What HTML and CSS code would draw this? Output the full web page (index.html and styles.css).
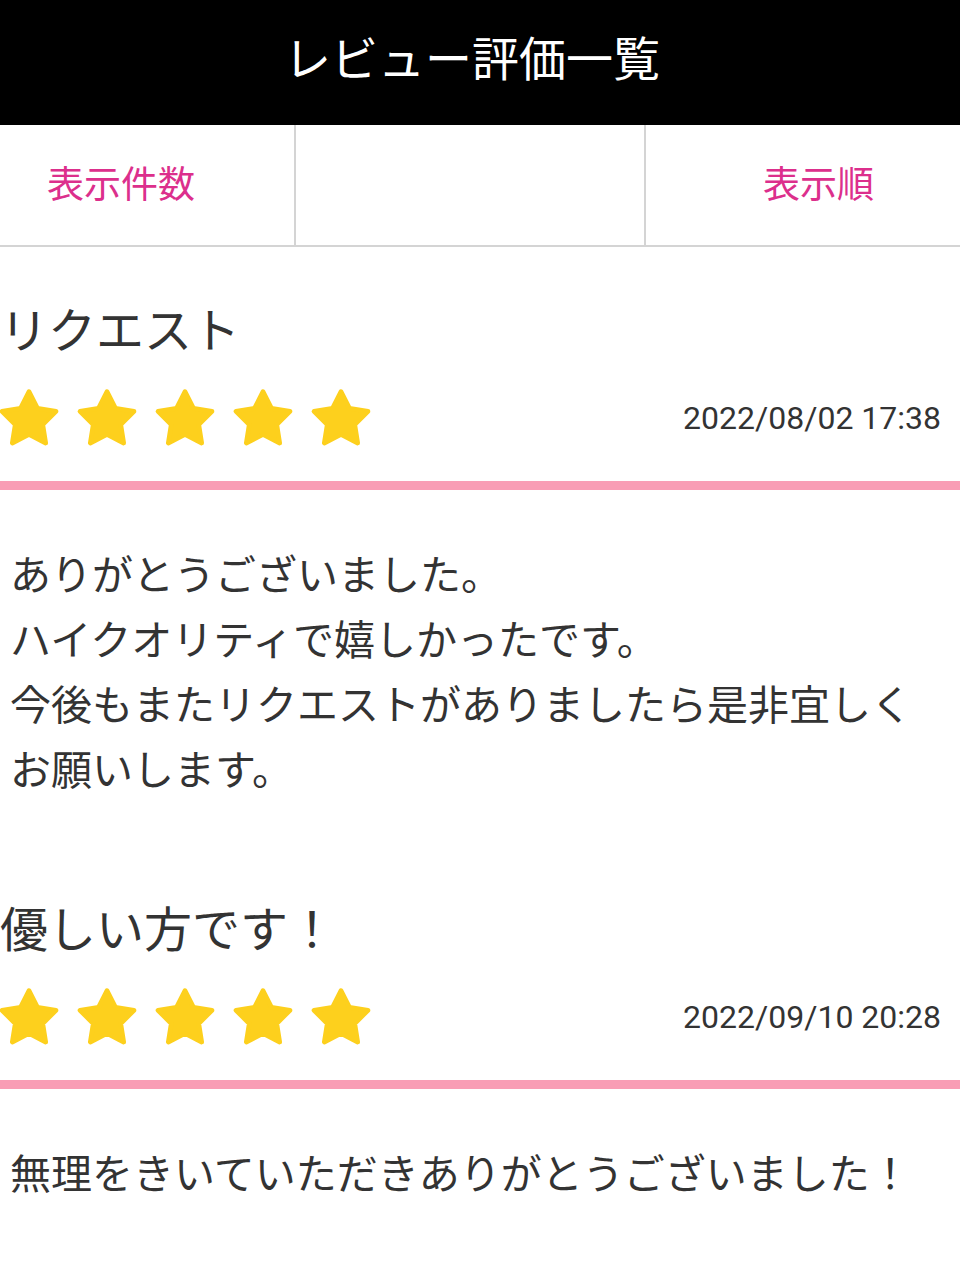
FILE: index.html
```html
<!DOCTYPE html>
<html lang="ja">
<head>
<meta charset="utf-8">
<title>レビュー評価一覧</title>
<link rel="stylesheet" href="styles.css">
</head>
<body>
<header class="page-header"><h1 class="page-title">レビュー評価一覧</h1></header>
<nav class="tabs">
  <div class="tab tab-count">表示件数</div>
  <div class="tab tab-empty"></div>
  <div class="tab tab-order">表示順</div>
</nav>
<main class="reviews">
  <article class="review">
    <h2 class="review-title">リクエスト</h2>
    <div class="review-meta">
      <div class="stars">
        <svg class="star" viewBox="0 0 24 24"><path d="M12 1.8L15.29 8.27L22.46 9.4L17.33 14.53L18.47 21.7L12 18.4L5.53 21.7L6.67 14.53L1.54 9.4L8.71 8.27Z"/></svg>
        <svg class="star" viewBox="0 0 24 24"><path d="M12 1.8L15.29 8.27L22.46 9.4L17.33 14.53L18.47 21.7L12 18.4L5.53 21.7L6.67 14.53L1.54 9.4L8.71 8.27Z"/></svg>
        <svg class="star" viewBox="0 0 24 24"><path d="M12 1.8L15.29 8.27L22.46 9.4L17.33 14.53L18.47 21.7L12 18.4L5.53 21.7L6.67 14.53L1.54 9.4L8.71 8.27Z"/></svg>
        <svg class="star" viewBox="0 0 24 24"><path d="M12 1.8L15.29 8.27L22.46 9.4L17.33 14.53L18.47 21.7L12 18.4L5.53 21.7L6.67 14.53L1.54 9.4L8.71 8.27Z"/></svg>
        <svg class="star" viewBox="0 0 24 24"><path d="M12 1.8L15.29 8.27L22.46 9.4L17.33 14.53L18.47 21.7L12 18.4L5.53 21.7L6.67 14.53L1.54 9.4L8.71 8.27Z"/></svg>
      </div>
      <time class="review-date">2022/08/02 17:38</time>
    </div>
    <p class="review-body">ありがとうございました。<br>ハイクオリティで嬉しかったです。<br>今後もまたリクエストがありましたら是非宜しく<br>お願いします。</p>
  </article>
  <article class="review">
    <h2 class="review-title">優しい方です！</h2>
    <div class="review-meta">
      <div class="stars">
        <svg class="star" viewBox="0 0 24 24"><path d="M12 1.8L15.29 8.27L22.46 9.4L17.33 14.53L18.47 21.7L12 18.4L5.53 21.7L6.67 14.53L1.54 9.4L8.71 8.27Z"/></svg>
        <svg class="star" viewBox="0 0 24 24"><path d="M12 1.8L15.29 8.27L22.46 9.4L17.33 14.53L18.47 21.7L12 18.4L5.53 21.7L6.67 14.53L1.54 9.4L8.71 8.27Z"/></svg>
        <svg class="star" viewBox="0 0 24 24"><path d="M12 1.8L15.29 8.27L22.46 9.4L17.33 14.53L18.47 21.7L12 18.4L5.53 21.7L6.67 14.53L1.54 9.4L8.71 8.27Z"/></svg>
        <svg class="star" viewBox="0 0 24 24"><path d="M12 1.8L15.29 8.27L22.46 9.4L17.33 14.53L18.47 21.7L12 18.4L5.53 21.7L6.67 14.53L1.54 9.4L8.71 8.27Z"/></svg>
        <svg class="star" viewBox="0 0 24 24"><path d="M12 1.8L15.29 8.27L22.46 9.4L17.33 14.53L18.47 21.7L12 18.4L5.53 21.7L6.67 14.53L1.54 9.4L8.71 8.27Z"/></svg>
      </div>
      <time class="review-date">2022/09/10 20:28</time>
    </div>
    <p class="review-body">無理をきいていただきありがとうございました！</p>
  </article>
</main>
</body>
</html>
```
FILE: styles.css
```css
* { box-sizing: border-box; }
html, body { margin: 0; padding: 0; background: #fff; }
body {
  width: 960px;
  font-family: "Noto Sans CJK JP", "Noto Sans", sans-serif;
  color: #333;
  overflow: hidden;
}
.page-header {
  background: #000;
  height: 125px;
  display: flex;
  align-items: center;
  justify-content: center;
}
.page-title {
  margin: 0;
  color: #fff;
  font-size: 47px;
  font-weight: 400;
  line-height: 1;
  padding-right: 16px;
  padding-bottom: 14px;
}
.tabs {
  display: grid;
  grid-template-columns: 296px 350px 314px;
  height: 122px;
  border-bottom: 2px solid #d4d4d4;
}
.tab {
  display: flex;
  align-items: center;
  color: #dc2f8c;
  font-size: 37px;
  line-height: 1;
  padding-bottom: 6px;
}
.tab-count { padding-left: 47px; border-right: 2px solid #d4d4d4; }
.tab-empty { border-right: 2px solid #d4d4d4; }
.tab-order { padding-left: 117px; }
.review { padding-top: 50px; }
.review + .review { padding-top: 96px; }
.review-title {
  margin: 0;
  font-size: 48px;
  font-weight: 400;
  line-height: 60px;
  color: #333;
}
.review-meta {
  margin-top: 31px;
  height: 60px;
  display: flex;
  align-items: center;
  justify-content: space-between;
  padding-right: 19px;
}
.stars { display: flex; gap: 16px; margin-left: -2px; }
.star {
  width: 62px;
  height: 62px;
  display: block;
}
.star path {
  fill: #fdd01d;
  stroke: #fdd01d;
  stroke-width: 1.8;
  stroke-linejoin: round;
}
.review-date {
  font-family: Roboto, "Liberation Sans", sans-serif;
  font-size: 32px;
  color: #333;
  line-height: 1;
}
.review-body {
  margin: 33px 0 0;
  border-top: 9px solid #f99db5;
  padding: 50px 10px 0;
  font-size: 41px;
  line-height: 65px;
  color: #333;
}
```
